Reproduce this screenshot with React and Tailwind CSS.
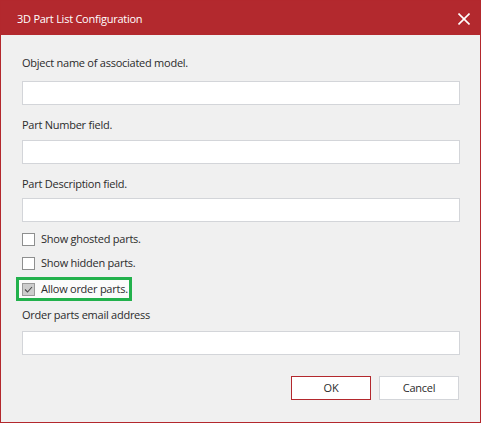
import React from "react";

const font = { fontFamily: '"Open Sans", "Noto Sans", sans-serif' };

function Field({ label, labelMt, inputMt }) {
  return (
    <>
      <div className={`${labelMt} h-[16px] leading-[16px] text-[11px] tracking-[-0.25px] text-[#2b2b2b]`}>{label}</div>
      <div className={`${inputMt} h-[24px] w-[438px] border border-[#d3d5d9] bg-white`} />
    </>
  );
}

function Box({ checked }) {
  return (
    <div
      className={`flex h-[13px] w-[13px] shrink-0 items-center justify-center border ${
        checked ? "border-[#9a9a9a] bg-[#cdcdcd]" : "border-[#8e8f8f] bg-white"
      }`}
    >
      {checked && (
        <svg width="11" height="11" viewBox="0 0 11 11">
          <polyline points="2,5.5 4.5,8 9,3" fill="none" stroke="#4a4a4a" strokeWidth="1.1" />
        </svg>
      )}
    </div>
  );
}

export default function App() {
  return (
    <div className="bg-white" style={font}>
      <div className="flex h-[423px] w-[481px] flex-col border border-[#b3282d] bg-[#f0f0f0]">
        <div className="flex h-[34px] shrink-0 items-center justify-between bg-[#b3292e] pl-[16px] pr-[10px] pt-[2px]">
          <span className="text-[11px] leading-[16px] tracking-[-0.25px] text-white">3D Part List Configuration</span>
          <svg width="12" height="12" viewBox="0 0 12 12" className="-mt-[1px]">
            <line x1="0.5" y1="0.5" x2="11.5" y2="11.5" stroke="white" strokeWidth="1.6" />
            <line x1="11.5" y1="0.5" x2="0.5" y2="11.5" stroke="white" strokeWidth="1.6" />
          </svg>
        </div>
        <div className="flex flex-col px-[21px] pt-[20px]">
          <Field label="Object name of associated model." labelMt="mt-0" inputMt="mt-[10px]" />
          <Field label="Part Number field." labelMt="mt-[12px]" inputMt="mt-[7px]" />
          <Field label="Part Description field." labelMt="mt-[12px]" inputMt="mt-[6px]" />

          <div className="mt-[9px] flex h-[16px] items-center gap-[6px] text-[11px] tracking-[-0.25px] text-[#2b2b2b]">
            <Box />
            <span className="leading-[16px]">Show ghosted parts.</span>
          </div>
          <div className="mt-[8px] flex h-[16px] items-center gap-[6px] text-[11px] tracking-[-0.25px] text-[#2b2b2b]">
            <Box />
            <span className="leading-[16px]">Show hidden parts.</span>
          </div>
          <div className="-ml-[6px] mt-[6px] flex h-[24px] w-[116px] items-center gap-[6px] border-[3px] border-[#22b14c] bg-[#fbfbfb] pl-[3px] text-[11px] tracking-[-0.25px] text-[#2b2b2b]">
            <Box checked />
            <span className="whitespace-nowrap leading-[16px]">Allow order parts.</span>
          </div>

          <Field label="Order parts email address" labelMt="mt-[6px]" inputMt="mt-[8px]" />

          <div className="mt-[21px] flex justify-end gap-[8px] text-[11px] tracking-[-0.25px] text-[#2b2b2b]">
            <button className="h-[24px] w-[80px] border border-[#b3282d] bg-white leading-[16px]">OK</button>
            <button className="h-[24px] w-[80px] border border-[#d3d5d9] bg-white leading-[16px]">Cancel</button>
          </div>
        </div>
      </div>
    </div>
  );
}
